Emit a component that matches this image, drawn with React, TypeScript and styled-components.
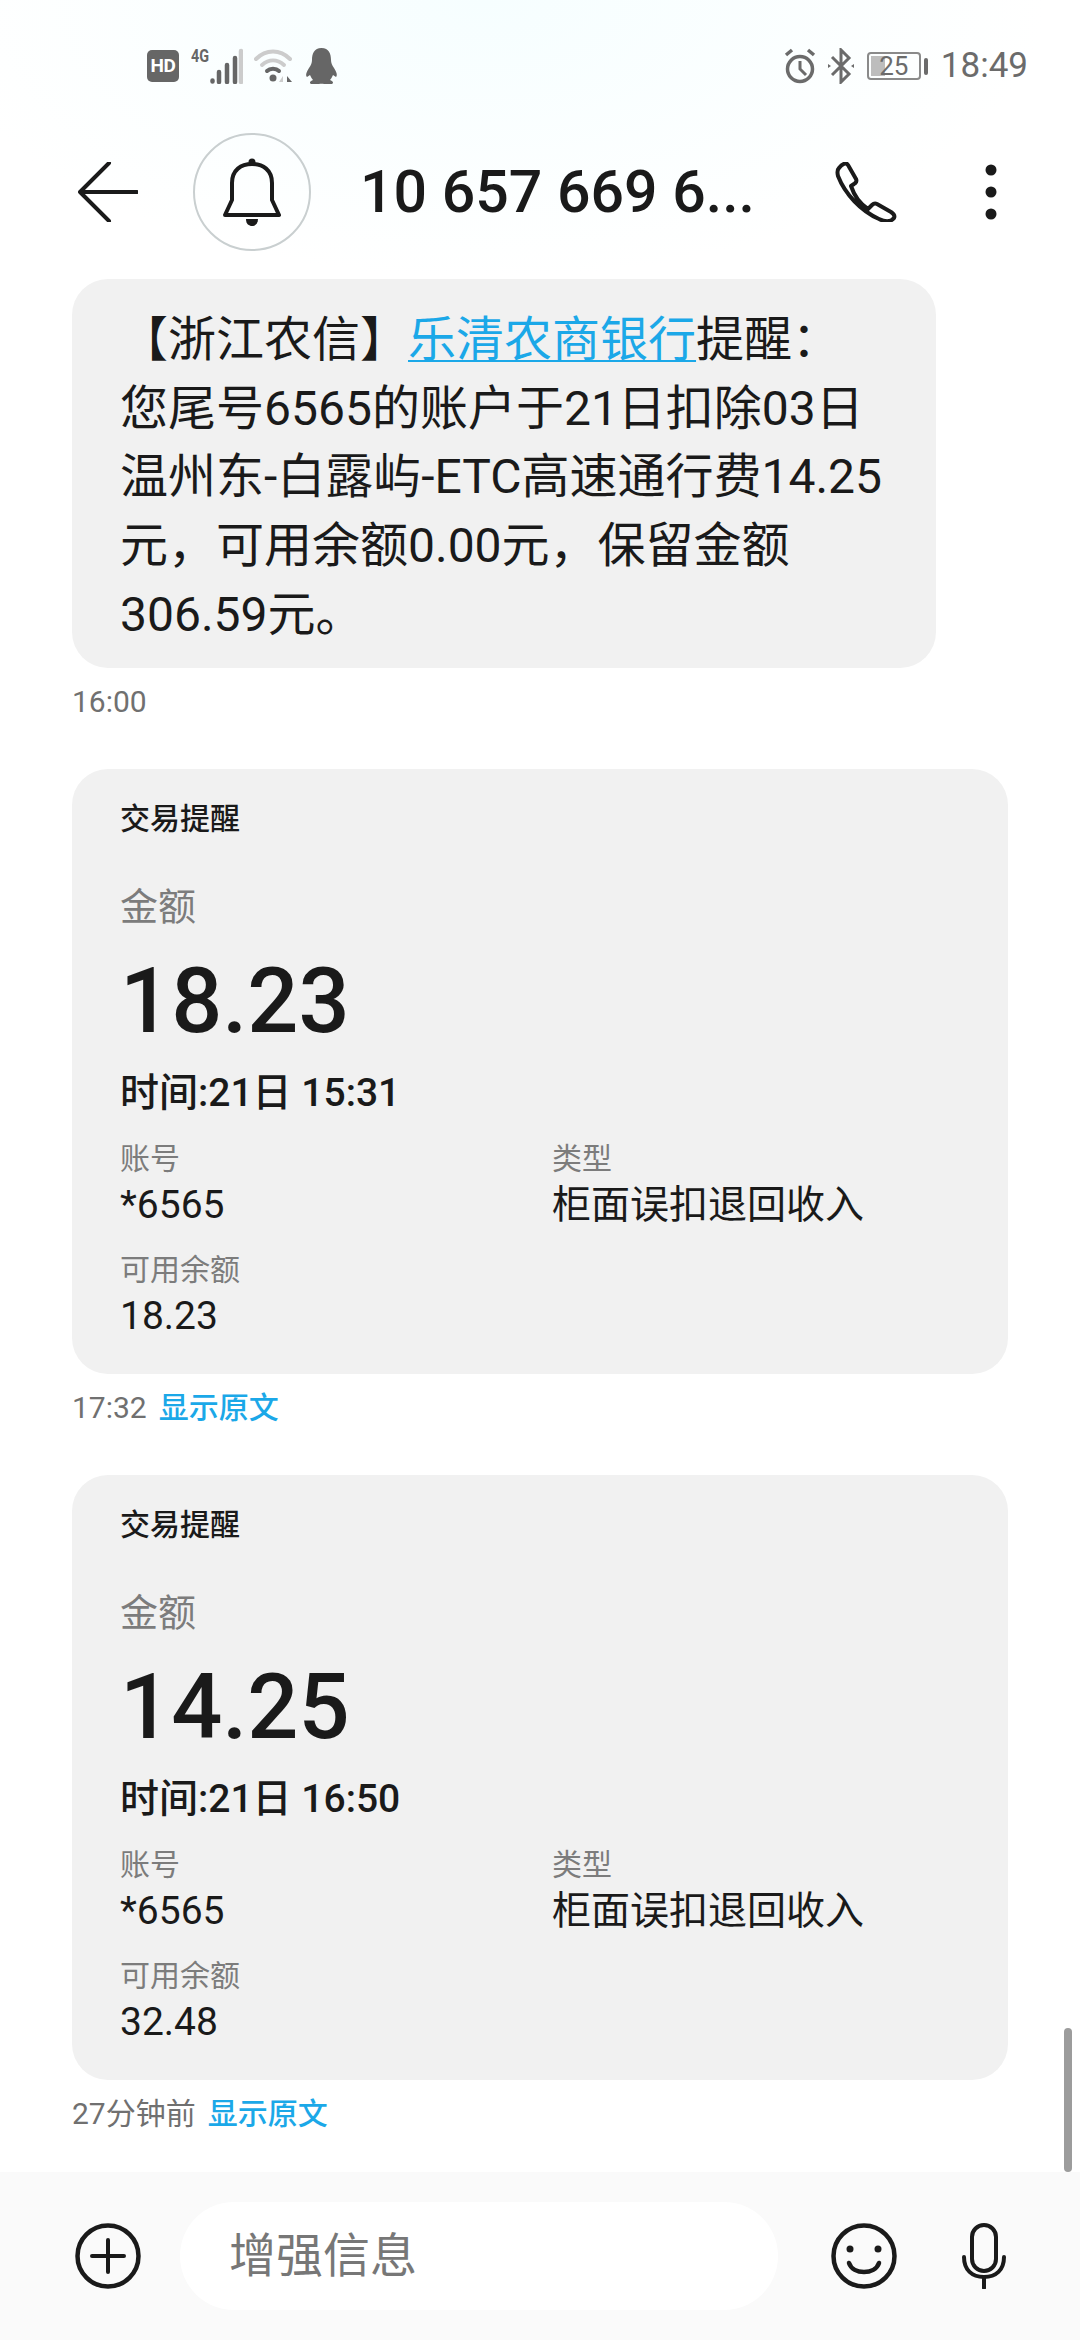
import styled, { createGlobalStyle } from "styled-components";

const GlobalStyle = createGlobalStyle`
  html, body {
    margin: 0;
    padding: 0;
    background: #ffffff;
  }
  * {
    box-sizing: border-box;
  }
`;

const FONT = `Roboto, "Noto Sans CJK SC", sans-serif`;

const Page = styled.div`
  position: relative;
  width: 1080px;
  height: 2340px;
  overflow: hidden;
  display: flex;
  flex-direction: column;
  font-family: ${FONT};
  color: #1a1a1a;
  background: radial-gradient(ellipse 560px 280px at 45% 0, #f6feff 0%, #ffffff 100%) top / 100% 278px no-repeat, #ffffff;
`;

const StatusBar = styled.div`
  height: 132px;
  flex: none;
  display: flex;
  align-items: center;
  justify-content: space-between;
  padding: 0 52px 0 147px;
`;

const StatusGroup = styled.div`
  display: flex;
  align-items: center;
`;

const HdBadge = styled.div`
  width: 32px;
  height: 32px;
  margin-right: 12px;
  border-radius: 5px;
  background: #666666;
  color: #ffffff;
  font-size: 19px;
  font-weight: 700;
  line-height: 32px;
  text-align: center;
  letter-spacing: -0.5px;
`;

const Signal = styled.div`
  display: flex;
  align-items: flex-start;
  height: 36px;
  margin-right: 11px;
`;

const NetLabel = styled.span`
  width: 19px;
  font-size: 18px;
  font-weight: 700;
  line-height: 16px;
  color: #666666;
  transform: scaleX(0.8);
  transform-origin: left center;
  white-space: nowrap;
`;

const Battery = styled.div`
  position: relative;
  width: 54px;
  height: 28px;
  margin-left: 13px;
  border: 2px solid #8a8a8a;
  border-radius: 4px;
  padding: 2px;
`;

const BatteryFill = styled.div`
  height: 100%;
  background: #bdbdbd;
`;

const BatteryLevel = styled.span`
  position: absolute;
  inset: 0;
  font-size: 26px;
  line-height: 24px;
  text-align: center;
  color: #6b6b6b;
`;

const BatteryNub = styled.div`
  width: 4px;
  height: 17px;
  margin: 0 13px 0 3px;
  border-radius: 2px;
  background: #6b6b6b;
`;

const Clock = styled.span`
  font-size: 35px;
  line-height: 40px;
  color: #6b6b6b;
`;

const Header = styled.header`
  height: 120px;
  flex: none;
  display: flex;
  align-items: center;
  padding-left: 78px;
`;

const Avatar = styled.div`
  width: 118px;
  height: 118px;
  margin-left: 55px;
  flex: none;
  display: flex;
  align-items: center;
  justify-content: center;
  border: 2px solid #c9cfd0;
  border-radius: 50%;
`;

const Title = styled.h1`
  width: 422px;
  margin: 0 0 0 49px;
  font-size: 59px;
  font-weight: 500;
  line-height: 70px;
  white-space: nowrap;
  color: #1a1a1a;
`;

const HeaderIcon = styled.svg<{ $left: number }>`
  flex: none;
  margin-left: ${(p) => p.$left}px;
`;

const Messages = styled.main`
  flex: 1;
  min-height: 0;
  padding: 27px 72px 0;
`;

const Bubble = styled.div`
  width: 864px;
  padding: 27px 48px 18px;
  border-radius: 36px;
  background: #f1f1f1;
  font-size: 48px;
  line-height: 68.7px;
  white-space: nowrap;
`;

const InlineLink = styled.a`
  color: #1ba8e8;
  text-decoration: underline;
  text-underline-offset: 4px;
  text-decoration-thickness: 2px;
`;

const Meta = styled.div`
  display: flex;
  gap: 12px;
  height: 40px;
  margin-top: 14px;
  font-size: 30px;
  line-height: 40px;
  color: #707070;
`;

const MetaLink = styled.span`
  font-weight: 500;
  color: #1ba8e8;
`;

const Card = styled.section`
  width: 936px;
  margin-top: 47px;
  padding: 30px 48px 33px;
  border-radius: 36px;
  background: #f1f1f1;
`;

const CardTitle = styled.div`
  font-size: 30px;
  font-weight: 500;
  line-height: 40px;
`;

const AmountLabel = styled.div`
  margin-top: 43px;
  font-size: 38px;
  line-height: 50px;
  color: #7c7c7c;
`;

const Amount = styled.div`
  margin-top: 20px;
  font-size: 90px;
  font-weight: 500;
  line-height: 100px;
`;

const CardTime = styled.div`
  margin-top: 16px;
  font-size: 39px;
  font-weight: 500;
  line-height: 50px;
`;

const Fields = styled.div`
  display: grid;
  grid-template-columns: 432px 1fr;
  row-gap: 20px;
  margin-top: 21px;
`;

const FieldLabel = styled.div`
  font-size: 30px;
  line-height: 40px;
  color: #7c7c7c;
`;

const FieldValue = styled.div`
  margin-top: 1px;
  font-size: 39px;
  line-height: 50px;
`;

const Composer = styled.footer`
  height: 168px;
  flex: none;
  display: flex;
  align-items: center;
  padding-left: 75px;
  background: #fafafa;
`;

const InputPill = styled.div`
  width: 598px;
  height: 108px;
  margin: 0 53px 0 39px;
  padding-left: 49px;
  border-radius: 54px;
  background: #ffffff;
  font-size: 47px;
  line-height: 108px;
  color: #777777;
`;

const Scrollbar = styled.div`
  position: absolute;
  top: 2028px;
  left: 1064px;
  width: 8px;
  height: 144px;
  border-radius: 4px;
  background: #9c9c9c;
`;

type Trade = {
  amount: string;
  time: string;
  balance: string;
  meta: string;
};

const trades: Trade[] = [
  { amount: "18.23", time: "时间:21日 15:31", balance: "18.23", meta: "17:32" },
  { amount: "14.25", time: "时间:21日 16:50", balance: "32.48", meta: "27分钟前" },
];

const TradeCard = ({ trade }: { trade: Trade }) => (
  <>
    <Card>
      <CardTitle>交易提醒</CardTitle>
      <AmountLabel>金额</AmountLabel>
      <Amount>{trade.amount}</Amount>
      <CardTime>{trade.time}</CardTime>
      <Fields>
        <div>
          <FieldLabel>账号</FieldLabel>
          <FieldValue>*6565</FieldValue>
        </div>
        <div>
          <FieldLabel>类型</FieldLabel>
          <FieldValue>柜面误扣退回收入</FieldValue>
        </div>
        <div>
          <FieldLabel>可用余额</FieldLabel>
          <FieldValue>{trade.balance}</FieldValue>
        </div>
      </Fields>
    </Card>
    <Meta>
      {trade.meta}
      <MetaLink>显示原文</MetaLink>
    </Meta>
  </>
);

export default function App() {
  return (
    <Page>
      <GlobalStyle />
      <StatusBar>
        <StatusGroup>
          <HdBadge>HD</HdBadge>
          <Signal>
            <NetLabel>4G</NetLabel>
            <svg width="33" height="36" viewBox="0 0 33 36">
              <g strokeWidth="4.5" strokeLinecap="round" stroke="#666">
                <path d="M2.5 32.5v1M9 24v10M17 17v17M25 10v24" />
                <path d="M31 3v31" stroke="#ccc" />
              </g>
            </svg>
          </Signal>
          <svg width="39" height="36" viewBox="0 0 39 36" fill="none" style={{ marginRight: 12 }}>
            <path d="M2 11C12 1 26 1 36 11" stroke="#ccc" strokeWidth="4" strokeLinecap="round" />
            <path d="M8 17C15 11 23 11 30 17" stroke="#ccc" strokeWidth="4" strokeLinecap="round" />
            <path d="M13 23C16 20 22 20 25 23" stroke="#666" strokeWidth="4" strokeLinecap="round" />
            <circle cx="19" cy="30" r="3.5" fill="#666" />
            <path d="M29 28v6h-4z" fill="#ccc" />
            <path d="M33 28v6h5z" fill="#666" />
          </svg>
          <svg width="33" height="36" viewBox="0 0 33 36">
            <path
              d="M16.5 0C9 0 7 6 7 12C7 15 6 17 4 20C2 23 0 27 2 29L5 27C6 29 7 31 8 32C5 33 4 35 6 36H14C15 35.5 18 35.5 19 36H27C29 35 28 33 25 32C26 31 27 29 28 27L31 29C33 27 31 23 29 20C27 17 26 15 26 12C26 6 24 0 16.5 0Z"
              fill="#666"
            />
          </svg>
        </StatusGroup>
        <StatusGroup>
          <svg width="32" height="36" viewBox="0 0 32 36" fill="none" stroke="#6b6b6b" style={{ marginRight: 12 }}>
            <circle cx="16" cy="21" r="12.5" strokeWidth="3.5" />
            <path d="M16 13v8l6 6" strokeWidth="3" />
            <path d="M2 7l6-5M30 7l-6-5" strokeWidth="3.5" />
          </svg>
          <svg width="26" height="36" viewBox="0 0 26 36" fill="none" stroke="#6b6b6b" strokeWidth="3">
            <path d="M4 9L21 26L13 34V2L21 10L4 27" />
            <path d="M0 16l3 2-3 2zM26 16l-3 2 3 2z" fill="#6b6b6b" stroke="none" />
          </svg>
          <Battery>
            <BatteryFill style={{ width: "30%" }} />
            <BatteryLevel>25</BatteryLevel>
          </Battery>
          <BatteryNub />
          <Clock>18:49</Clock>
        </StatusGroup>
      </StatusBar>

      <Header>
        <svg width="60" height="60" viewBox="0 0 60 60" fill="none" stroke="#1a1a1a" strokeWidth="4" strokeLinecap="round">
          <path d="M31 1L2 30L31 59M2 30H59" strokeLinejoin="round" />
        </svg>
        <Avatar>
          <svg width="60" height="70" viewBox="0 0 60 70" fill="none">
            <circle cx="30" cy="5" r="3.5" fill="#1a1a1a" />
            <path d="M10 43V26C10 13 19 7 30 7C41 7 50 13 50 26V43L57 58H3Z" stroke="#1a1a1a" strokeWidth="4" strokeLinejoin="round" />
            <path d="M24 62H36C36 67 33 69 30 69C27 69 24 67 24 62Z" fill="#1a1a1a" />
          </svg>
        </Avatar>
        <Title>10 657 669 6...</Title>
        <HeaderIcon $left={53} width="62" height="60" viewBox="0 0 62 60" fill="none">
          <path
            d="M4 6C7 2 11 0 13 3L21 17C22 19 21 21 19 22L16 24C19 33 25 42 33 47L37 43C38.5 41.5 40 41 42 42L56 50C59 52 60 54 59 56C56 60 50 60 44 57C26 49 10 32 3 14C2 10 2 8 4 6Z"
            stroke="#1a1a1a"
            strokeWidth="4"
            strokeLinejoin="round"
          />
        </HeaderIcon>
        <HeaderIcon $left={87} width="14" height="56" viewBox="0 0 14 56" fill="#1a1a1a">
          <circle cx="7" cy="6" r="5.5" />
          <circle cx="7" cy="28" r="5.5" />
          <circle cx="7" cy="50" r="5.5" />
        </HeaderIcon>
      </Header>

      <Messages>
        <Bubble>
          【浙江农信】<InlineLink>乐清农商银行</InlineLink>提醒：
          <br />
          您尾号6565的账户于21日扣除03日
          <br />
          温州东-白露屿-ETC高速通行费14.25
          <br />
          元，可用余额0.00元，保留金额
          <br />
          306.59元。
        </Bubble>
        <Meta>16:00</Meta>
        {trades.map((trade) => (
          <TradeCard key={trade.meta} trade={trade} />
        ))}
      </Messages>

      <Composer>
        <svg width="66" height="66" viewBox="0 0 66 66" fill="none" stroke="#1a1a1a" strokeLinecap="round">
          <circle cx="33" cy="33" r="30.5" strokeWidth="4.5" />
          <path d="M33 17V49M17 33H49" strokeWidth="4" />
        </svg>
        <InputPill>增强信息</InputPill>
        <svg width="66" height="66" viewBox="0 0 66 66" fill="none" stroke="#1a1a1a" strokeLinecap="round">
          <circle cx="33" cy="33" r="30.5" strokeWidth="4.5" />
          <circle cx="19" cy="26" r="3.5" fill="#1a1a1a" stroke="none" />
          <circle cx="47" cy="26" r="3.5" fill="#1a1a1a" stroke="none" />
          <path d="M18 40C22 52 44 52 48 40" strokeWidth="4.5" />
        </svg>
        <svg width="44" height="66" viewBox="0 0 44 66" fill="none" stroke="#1a1a1a" strokeLinecap="round" style={{ marginLeft: 65 }}>
          <rect x="10" y="2" width="24" height="46" rx="12" strokeWidth="4" />
          <path d="M2 34C2 47 10 54 22 54C34 54 42 47 42 34" strokeWidth="4" />
          <path d="M22 54V65" strokeWidth="4" />
        </svg>
      </Composer>
      <Scrollbar />
    </Page>
  );
}
